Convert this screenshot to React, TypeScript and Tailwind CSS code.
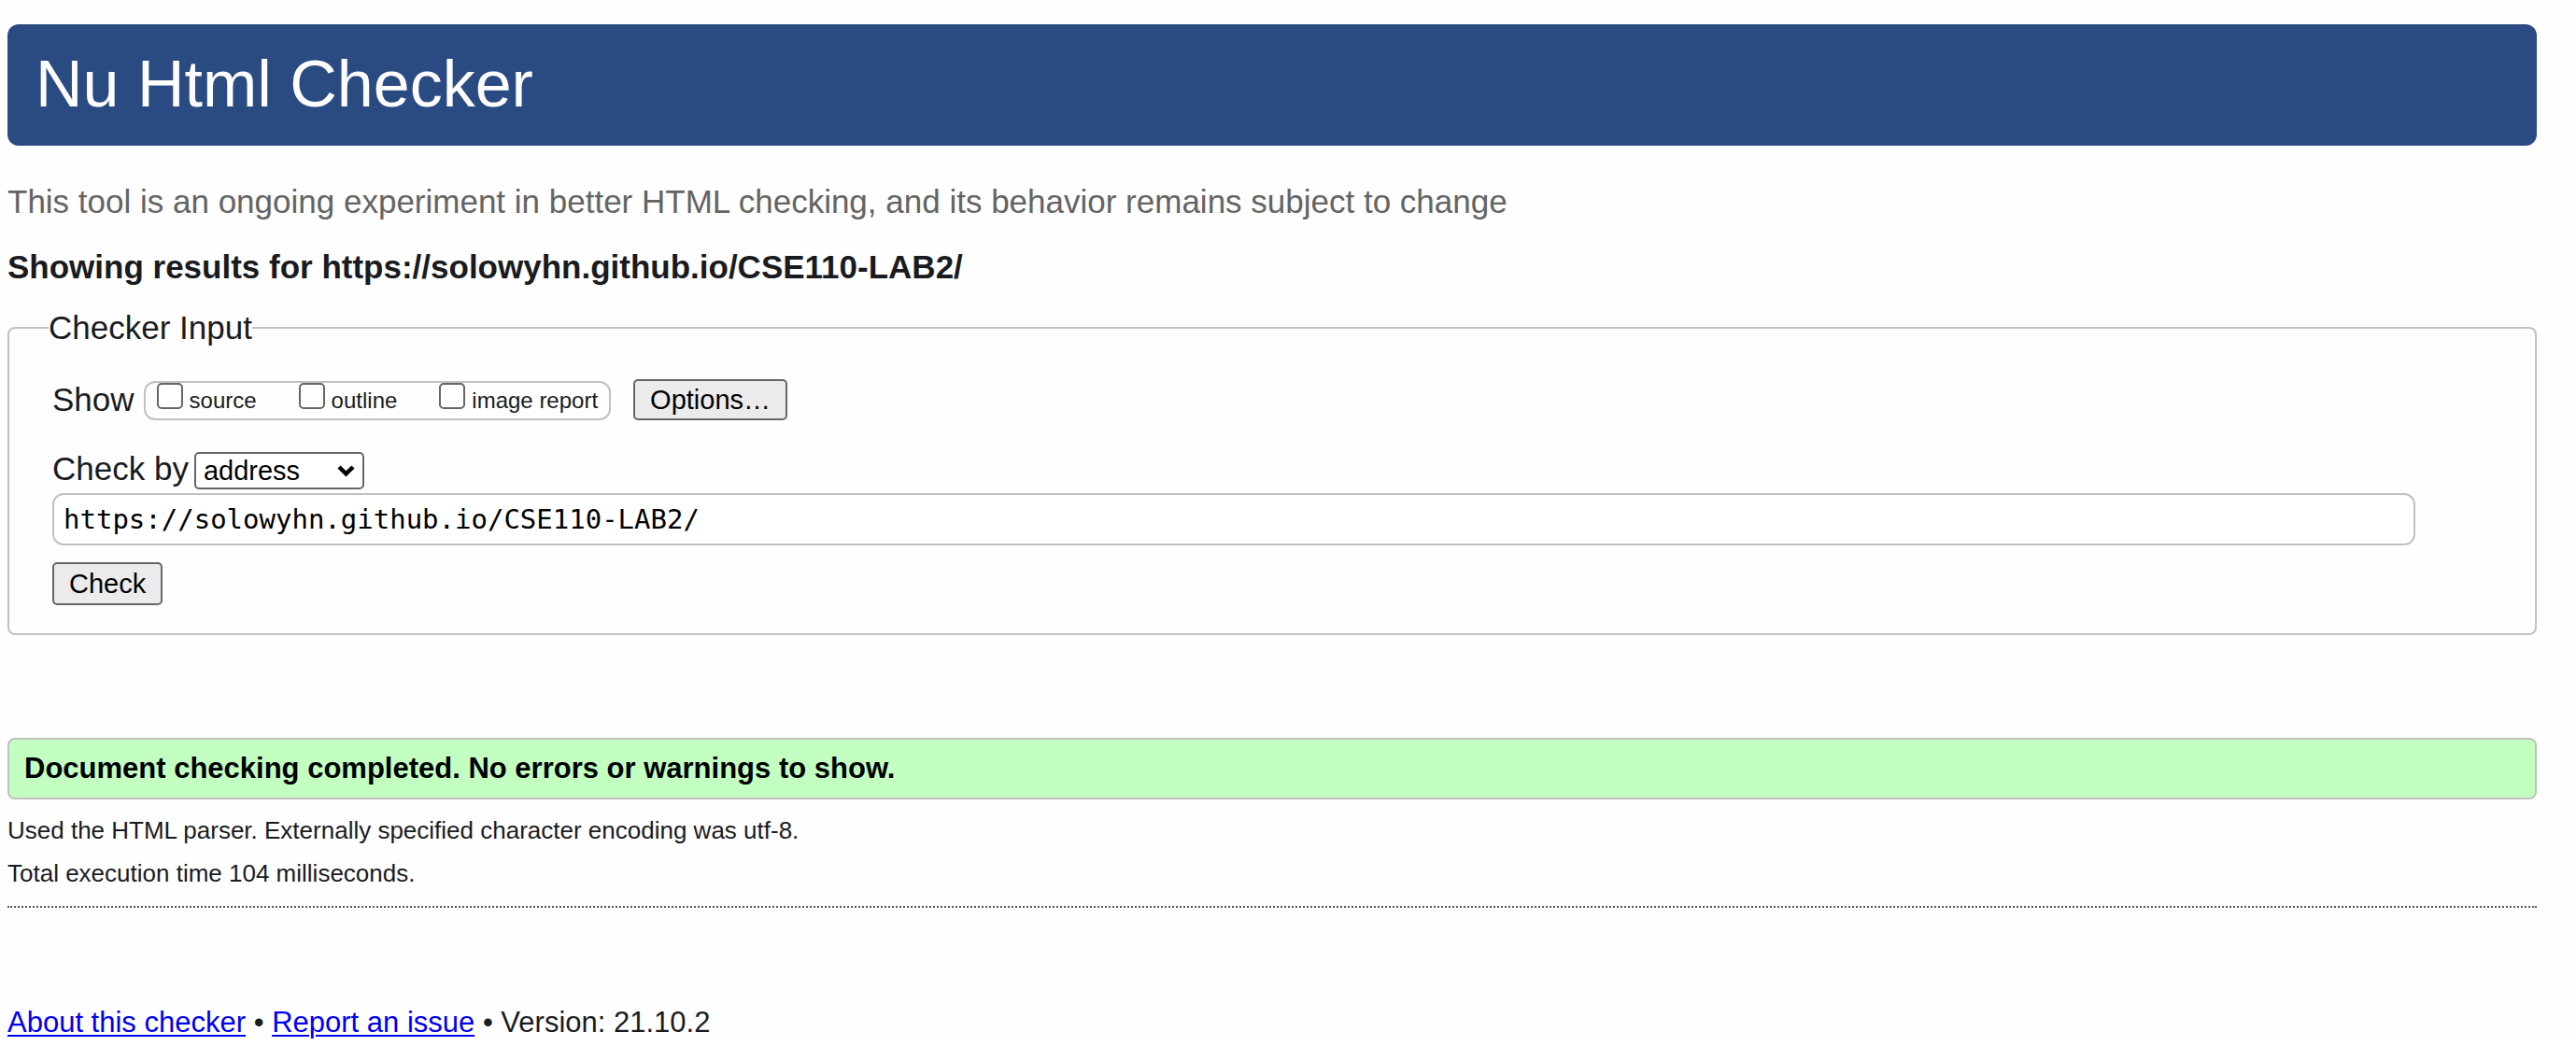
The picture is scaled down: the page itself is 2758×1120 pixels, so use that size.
import { useState } from 'react';

const reports = ['source', 'outline', 'image report'];

const buttonClass =
  'rounded-[5px] border-2 border-[#666666] bg-[#ebebeb] px-4 text-[29px] text-black';

export default function App() {
  const [address, setAddress] = useState('https://solowyhn.github.io/CSE110-LAB2/');

  return (
    <div className="bg-[#fefefe] pt-[26px] pr-[42px] pl-2 font-['Liberation_Sans',Arial,sans-serif] text-[#1a1b1f]">
      <header className="rounded-xl bg-[#2a4a82] pt-6 pr-[30px] pb-[26px] pl-[30px]">
        <h1 className="text-[70px] leading-[80px] text-[#fdfdfd]">Nu Html Checker</h1>
      </header>

      <main>
        <p className="mt-10 text-[35px] leading-10 text-[#646464]">
          This tool is an ongoing experiment in better HTML checking, and its behavior remains
          subject to change
        </p>
        <h2 className="mt-[30px] text-[35px] leading-10 font-bold">
          Showing results for https://solowyhn.github.io/CSE110-LAB2/
        </h2>

        <form onSubmit={(e) => e.preventDefault()}>
          <fieldset className="mt-6 rounded-lg border-2 border-[#c1c1c1] pr-[46px] pb-[30px] pl-[46px]">
            <legend className="-ml-1 text-[35px] leading-[42px]">Checker Input</legend>

            <div className="mt-[34px] flex items-center">
              <span id="show-label" className="text-[35px] leading-10">
                Show
              </span>
              <div
                role="group"
                aria-labelledby="show-label"
                className="mt-0.5 ml-2.5 flex gap-[45px] rounded-xl border-2 border-[#c1c1c1] px-3"
              >
                {reports.map((name) => (
                  <label key={name} className="flex items-start gap-[7px] text-[24px] leading-[38px]">
                    <input
                      type="checkbox"
                      className="size-7 appearance-none rounded-[5px] border-2 border-[#666666] bg-white checked:bg-[#0075ff]"
                    />
                    {name}
                  </label>
                ))}
              </div>
              <button type="button" className={`${buttonClass} ml-6 h-11 leading-10`}>
                Options…
              </button>
            </div>

            <div className="mt-[34px] flex items-start gap-1.5">
              <label htmlFor="docselect" className="text-[35px] leading-9">
                Check by
              </label>
              <div className="relative">
                <select
                  id="docselect"
                  defaultValue="address"
                  className="block h-10 w-[182px] appearance-none rounded-[5px] border-2 border-[#666666] bg-white pl-2 text-[29px] leading-9 text-black"
                >
                  <option>address</option>
                  <option>file upload</option>
                  <option>text input</option>
                </select>
                <svg
                  className="pointer-events-none absolute top-3.5 right-2.5 h-[13px] w-[19px]"
                  viewBox="0 0 19 13"
                  fill="none"
                  stroke="#000"
                  strokeWidth="4.5"
                  aria-hidden="true"
                >
                  <path d="M2 2 9.5 9.3 17 2" />
                </svg>
              </div>
            </div>

            <div className="mt-1 pr-[82px]">
              <input
                type="url"
                aria-label="Address"
                value={address}
                onChange={(e) => setAddress(e.target.value)}
                className="block h-14 w-full rounded-xl border-2 border-[#c1c1c1] bg-white px-2.5 font-['DejaVu_Sans_Mono',monospace] text-[29px] text-black"
              />
            </div>
            <button type="submit" className={`${buttonClass} mt-[18px] block h-[46px] leading-10`}>
              Check
            </button>
          </fieldset>
        </form>

        <p className="mt-[110px] rounded-lg border-2 border-[#c1c1c1] bg-[#c3ffc1] px-4 py-[11px] text-[31px] leading-10 font-bold text-black">
          Document checking completed. No errors or warnings to show.
        </p>
        <p className="mt-[17px] text-[26px] leading-8">
          Used the HTML parser. Externally specified character encoding was utf-8.
        </p>
        <p className="mt-3.5 text-[26px] leading-8">Total execution time 104 milliseconds.</p>
      </main>

      <hr className="mt-[19px] border-t-2 border-dotted border-[#555555]" />

      <footer className="mt-[103px] text-[31px] leading-10">
        <a href="#about" className="text-[#0000ee] underline decoration-2 underline-offset-3">
          About this checker
        </a>{' '}
        •{' '}
        <a href="#issue" className="text-[#0000ee] underline decoration-2 underline-offset-3">
          Report an issue
        </a>{' '}
        • Version: 21.10.2
      </footer>
    </div>
  );
}
